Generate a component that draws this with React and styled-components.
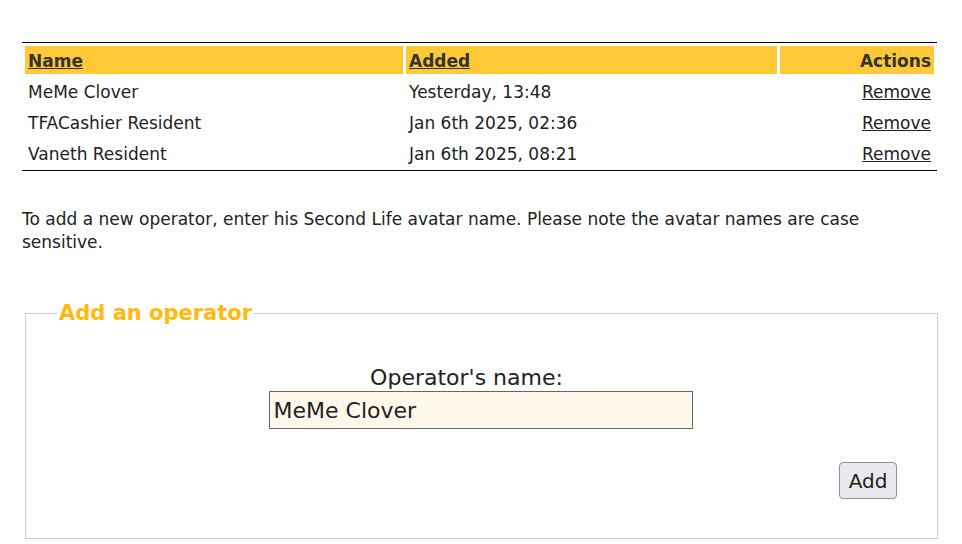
import styled, { createGlobalStyle } from "styled-components";

const GlobalStyle = createGlobalStyle`
  body {
    margin: 0;
    background: #ffffff;
    font-family: "DejaVu Sans", "Liberation Sans", sans-serif;
    color: #222222;
  }
`;

const Page = styled.div`
  padding: 42px 25px 0 22px;
  width: 915px;
`;

const Table = styled.table`
  width: 915px;
  border-collapse: separate;
  border-spacing: 3px;
  border-top: 1px solid #000;
  border-bottom: 1px solid #000;
  font-size: 17px;
`;

const HeadCell = styled.th`
  background: #ffc837;
  height: 28px;
  padding: 2px 3px 0;
  line-height: 26px;
  text-align: ${(props) => (props.right ? "right" : "left")};
  font-weight: bold;
  color: #333;
  width: ${(props) => (props.w ? `${props.w}px` : "auto")};
  box-sizing: border-box;
`;

const SortLink = styled.a`
  color: #333;
  text-decoration: underline;
`;

const Cell = styled.td`
  height: 28px;
  box-sizing: border-box;
  padding: 2px 3px 0;
  line-height: 26px;
  text-align: ${(props) => (props.right ? "right" : "left")};
  color: #222;
`;

const RemoveLink = styled.a`
  color: #222;
  text-decoration: underline;
`;

const Note = styled.p`
  margin: 37px 0 0;
  font-size: 17px;
  line-height: 23px;
`;

const Fieldset = styled.fieldset`
  margin: 46px 0 0 3px;
  padding: 0 31px 38px;
  border: 1px solid #cccccc;
  width: 913px;
  box-sizing: border-box;
  height: 239px;
`;

const Legend = styled.legend`
  color: #ffb90f;
  font-weight: bold;
  font-size: 21px;
  padding: 0 2px;
  line-height: 26px;
`;

const Field = styled.div`
  display: flex;
  flex-direction: column;
  align-items: center;
  margin-top: 39px;
`;

const Label = styled.label`
  font-size: 22px;
  line-height: 26px;
  margin-right: 30px;
  color: #222;
`;

const Input = styled.input`
  width: 424px;
  height: 38px;
  margin-right: 2px;
  box-sizing: border-box;
  border: 1px solid #666;
  background: #fff8ea;
  font-family: "DejaVu Sans", sans-serif;
  font-size: 22px;
  padding: 0 4px;
  color: #222;
`;

const Actions = styled.div`
  display: flex;
  justify-content: flex-end;
  margin-top: 33px;
  padding-right: 9px;
`;

const Button = styled.button`
  width: 58px;
  height: 37px;
  font-family: "DejaVu Sans", sans-serif;
  font-size: 20px;
  background: #e9e9ed;
  border: 1px solid #8f8f9d;
  border-radius: 4px;
  color: #222;
  padding: 0;
`;

const rows = [
  { name: "MeMe Clover", added: "Yesterday, 13:48" },
  { name: "TFACashier Resident", added: "Jan 6th 2025, 02:36" },
  { name: "Vaneth Resident", added: "Jan 6th 2025, 08:21" },
];

export default function App() {
  return (
    <Page>
      <GlobalStyle />
      <Table>
        <thead>
          <tr>
            <HeadCell w={378}>
              <SortLink href="#">Name</SortLink>
            </HeadCell>
            <HeadCell w={371}>
              <SortLink href="#">Added</SortLink>
            </HeadCell>
            <HeadCell right>Actions</HeadCell>
          </tr>
        </thead>
        <tbody>
          {rows.map((r) => (
            <tr key={r.name}>
              <Cell>{r.name}</Cell>
              <Cell>{r.added}</Cell>
              <Cell right>
                <RemoveLink href="#">Remove</RemoveLink>
              </Cell>
            </tr>
          ))}
        </tbody>
      </Table>
      <Note>
        To add a new operator, enter his Second Life avatar name. Please note
        the avatar names are case sensitive.
      </Note>
      <Fieldset>
        <Legend>Add an operator</Legend>
        <Field>
          <Label htmlFor="opname">Operator's name:</Label>
          <Input id="opname" defaultValue="MeMe Clover" />
        </Field>
        <Actions>
          <Button>Add</Button>
        </Actions>
      </Fieldset>
    </Page>
  );
}
